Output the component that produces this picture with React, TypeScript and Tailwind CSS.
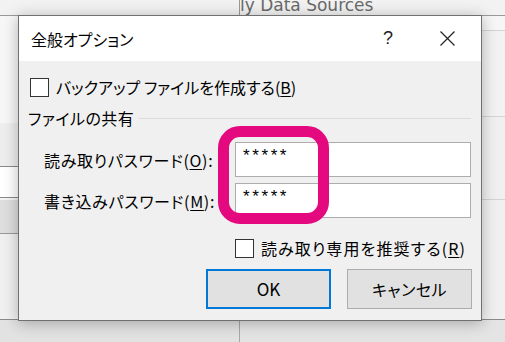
const jp = {
  fontFamily: '"Noto Sans CJK JP", "Noto Sans", sans-serif',
  fontFeatureSettings: '"palt"',
};

function CheckBox() {
  return <span className="block w-[19px] h-[19px] shrink-0 border border-[#333333] bg-white" />;
}

function Key({ k }: { k: string }) {
  return (
    <>
      (<span className="underline underline-offset-2 decoration-1">{k}</span>)
    </>
  );
}

function PasswordRow({ label, k }: { label: string; k: string }) {
  return (
    <div className="flex items-center">
      <div className="w-[216px] pl-[25px] text-[16px] leading-5 tracking-[0.7px] text-black whitespace-nowrap">
        {label}
        <Key k={k} />:
      </div>
      <div className="w-[236px] h-[35px] border border-[#adadad] bg-white pl-[7px] pt-[5px]">
        <span
          className="block text-[17px] leading-4 tracking-[2.6px] text-black"
          style={{ fontFamily: '"Liberation Sans", sans-serif' }}
        >
          *****
        </span>
      </div>
    </div>
  );
}

export default function App() {
  return (
    <div className="relative w-[505px] h-[342px] overflow-hidden bg-[#f0f0f0]" style={jp}>
      {/* background window */}
      <div className="flex flex-col h-full">
        <div className="relative h-[16px] bg-[#f2f2f2] border-b border-[#9a9a9a] shrink-0 overflow-hidden">
          <div className="absolute left-[239px] top-0 h-full w-px bg-[#9a9a9a]" />
          <span
            className="absolute left-[240px] top-[-6px] text-[17px] leading-[22px] text-[#6a6a6a]"
            style={{ fontFamily: '"DejaVu Sans", sans-serif' }}
          >
            ly Data Sources
          </span>
        </div>
        <div className="flex flex-1">
          <div className="w-[240px] flex flex-col">
            <div className="h-[107px] bg-[#f7f7f7]" />
            <div className="h-[44px] bg-[#eeeeee] border-b border-[#8a8a8a]" />
            <div className="h-[31px] bg-white border-b border-[#8a8a8a]" />
            <div className="h-[36px] bg-[#dedede] border-t-2 border-[#f4f4f4] border-b border-b-[#9a9a9a]" />
            <div className="h-[86px] bg-[#f0f0f0] border-b border-[#8a8a8a]" />
            <div className="flex-1 bg-[#e2e2e2] border-r border-[#a8a8a8]" />
          </div>
          <div className="flex-1 flex flex-col">
            <div className="h-[15px] bg-[#f6f6f6] border-b border-[#d4d4d4]" />
            <div className="h-[86px] bg-[#f2f2f2] border-b border-[#d4d4d4]" />
            <div className="h-[83px] bg-[#f0f0f0] border-b border-[#d4d4d4]" />
            <div className="h-[120px] bg-[#f0f0f0] border-b border-[#8a8a8a]" />
            <div className="flex-1 bg-[#e4e4e4]" />
          </div>
        </div>
      </div>

      {/* dialog */}
      <div className="absolute left-[18px] top-[15px] w-[464px] h-[306px] flex flex-col border border-[#707070] bg-[#f0f0f0] shadow-[0_2px_14px_rgba(0,0,0,0.28)]">
        <div className="h-[45px] shrink-0 bg-white flex items-center">
          <span className="pl-[12px] text-[16px] leading-5 text-black flex-1">全般オプション</span>
          <span className="w-[46px] text-center text-[18px] text-[#222]" style={{ fontFamily: '"Liberation Sans", sans-serif' }}>
            ?
          </span>
          <span className="w-[70px] flex justify-center pl-[12px] pr-[10px]">
            <svg width="15" height="15" viewBox="0 0 15 15" fill="none" stroke="#222" strokeWidth="1.2">
              <path d="M0.5 0.5 L14.5 14.5 M14.5 0.5 L0.5 14.5" />
            </svg>
          </span>
        </div>

        <div className="flex flex-col text-[16px] leading-5 text-black">
          <div className="flex items-center mt-[16px] pl-[11px] gap-[7px]">
            <CheckBox />
            <span>
              バックアップ ファイルを作成する<Key k="B" />
            </span>
          </div>

          <div className="flex items-center mt-[11px] pl-[9px] pr-[10px]">
            <span className="tracking-[0.5px]">ファイルの共有</span>
            <span className="flex-1 ml-[5px] h-px bg-[#dcdcdc]" />
          </div>

          <div className="flex flex-col gap-[6px] mt-[14px]">
            <PasswordRow label="読み取りパスワード" k="O" />
            <PasswordRow label="書き込みパスワード" k="M" />
          </div>

          <div className="flex items-center mt-[20px] pl-[216px] gap-[7px]">
            <CheckBox />
            <span className="tracking-[1.1px]">
              読み取り専用を推奨する<Key k="R" />
            </span>
          </div>

          <div className="flex mt-[11px] pl-[187px] gap-[16px]">
            <button className="w-[125px] h-[40px] bg-[#e1e1e1] border-2 border-[#0078d7] text-[17px] text-black">
              OK
            </button>
            <button className="w-[125px] h-[40px] bg-[#e1e1e1] border border-[#adadad] text-[16px] tracking-[0.5px] text-black">
              キャンセル
            </button>
          </div>
        </div>
      </div>

      {/* highlight */}
      <div className="absolute left-[218px] top-[126px] w-[111px] h-[98px] rounded-[22px] border-[11px] border-[#e5097f]" />
    </div>
  );
}
